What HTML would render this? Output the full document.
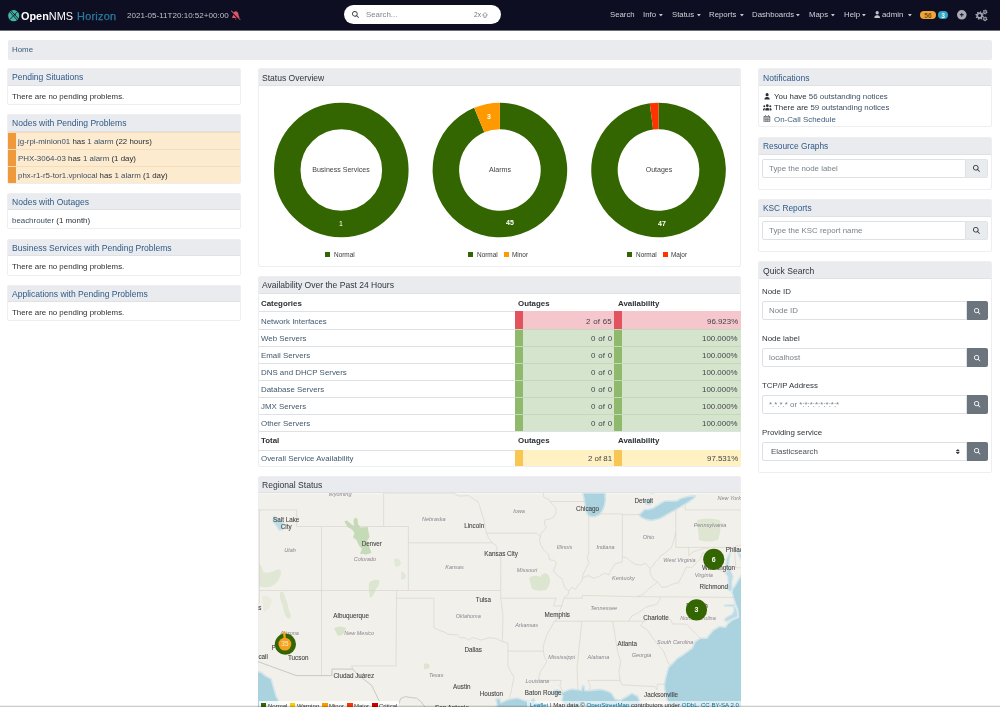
<!DOCTYPE html>
<html lang="en"><head><meta charset="utf-8"><title>OpenNMS Web Console</title>
<style>
*{box-sizing:border-box;margin:0;padding:0}
html,body{width:1000px;height:707px;overflow:hidden;background:#fff}
body{font-family:"Liberation Sans",Arial,sans-serif;font-size:7.9px;color:#2b2f33;position:relative;line-height:1}
.ab,.ic,.t{position:absolute}
.ic{overflow:visible}
.wc{will-change:transform}
.t{will-change:transform;white-space:nowrap;line-height:10px;height:10px}
.nav{left:0;top:0;width:1000px;height:30px;background:#0d0e22}
.nl{color:#d0d1d9;font-size:7.8px}
.card{position:absolute;border:1px solid #eceef0;border-radius:2px;background:#fff;overflow:hidden}
.ch{position:absolute;left:0;top:0;right:0;background:#e9ebee;border-bottom:1px solid #dfe2e5}
.h{font-size:8.55px;color:#2f5a88}
.hd{font-size:8.55px;color:#30363c}
a{color:#3d5c7c;text-decoration:none}
.b{font-weight:bold}
.inp{position:absolute;border:1px solid #dde1e5;border-radius:2px 0 0 2px;background:#fff}
.btnl{position:absolute;border:1px solid #e2e5e8;border-left:0;border-radius:0 2px 2px 0;background:#e9ecef}
.btnd{position:absolute;border-radius:0 2px 2px 0;background:#6c757d}
.ph{color:#7a8288}
</style></head>
<body>
<nav>
<div class="ab nav"></div><div class="ab" style="left:0;top:30px;width:1000px;height:1px;background:#6d6e7a"></div>
<svg class="ic" style="left:7.8px;top:9.6px;width:11.4px;height:11.4px" viewBox="0 0 100 100">
<circle cx="50" cy="50" r="49" fill="#43b5a2"/>
<path d="M14 14 L84 92 M26 6 L94 80 M88 10 L16 84" stroke="#0d0e22" stroke-width="7" fill="none"/>
<circle cx="60" cy="40" r="7" fill="#0d0e22"/>
</svg>
<div class="t " style="left:21.2px;top:10.40px;font-size:10.9px;color:#fff;line-height:12px;height:12px;top:9.6px"><span class="b">Open</span>NMS</div>
<div class="t " style="left:76.6px;top:10.40px;font-size:10.9px;color:#2a7ba0;letter-spacing:0.27px;line-height:12px;height:12px;top:9.6px;-webkit-text-stroke:0.25px #2a7ba0">Horizon</div>
<div class="t " style="left:127px;top:10.50px;font-size:8.05px;color:#bfc0c8">2021-05-11T20:10:52+00:00</div>
<svg class="ic" style="left:230.6px;top:10.6px;width:9.6px;height:8.6px;" viewBox="0 0 576 512" preserveAspectRatio="xMidYMid meet"><path fill="#dd5668" d="M41-24.9c-9.4-9.4-24.6-9.4-33.9 0S-2.3-.3 7 9.1l528 528c9.4 9.4 24.6 9.4 33.9 0s9.4-24.6 0-33.9l-87.5-87.5c17.2-2.4 30.5-17.3 30.5-35.2 0-8.1-2.7-15.9-7.8-22.2l-9.8-12.2c-29.9-37.6-46.3-84.3-46.3-132.4V192c0-77.4-55-142-128-156.8V32c0-17.7-14.3-32-32-32s-32 14.3-32 32v3.2c-38.6 7.8-72.2 29.6-95.2 59.7zm87 238.5c0 48.1-16.4 94.8-46.4 132.4l-9.8 12.2c-5 6.3-7.8 14.1-7.8 22.2 0 19.6 15.9 35.5 35.5 35.5h235.3L127.9 209v4.5zM288 512c29.8 0 54.9-20.4 62-48H226c7.1 27.6 32.2 48 62 48"/></svg>
<div class="ab" style="left:344.4px;top:5px;width:157px;height:19.4px;border-radius:9.7px;background:#fff"></div>
<svg class="ic" style="left:352.2px;top:11.4px;width:7px;height:7px;" viewBox="0 0 512 512" preserveAspectRatio="xMidYMid meet"><path fill="#3a3f45" d="M416 208c0 45.9-14.9 88.3-40 122.7l126.6 126.7c12.5 12.5 12.5 32.8 0 45.3s-32.8 12.5-45.3 0L330.7 376c-34.4 25.1-76.8 40-122.7 40C93.1 416 0 322.9 0 208S93.1 0 208 0s208 93.1 208 208M208 352a144 144 0 1 0 0-288 144 144 0 1 0 0 288"/></svg>
<div class="t " style="left:365.6px;top:10.00px;font-size:7.85px;color:#80868c">Search...</div>
<div class="t " style="left:473.6px;top:10.00px;font-size:6.6px;color:#70767c">2x</div>
<svg class="ic" style="left:481.8px;top:12px;width:6px;height:6px" viewBox="0 0 12 12"><path d="M6 1 L11 6.2 H8.3 V10.6 H3.7 V6.2 H1 Z" fill="none" stroke="#70767c" stroke-width="1.3" stroke-linejoin="round"/></svg>
<div class="t nl" style="left:610px;top:10.00px;">Search</div>
<div class="t nl" style="left:643.4px;top:10.00px;">Info</div>
<svg class="ic" style="left:659px;top:13.9px;width:3.8px;height:2.4px" viewBox="0 0 38 24"><path d="M2 1 H36 Q38 1 36.5 3 L20.5 22 Q19 24 17.5 22 L1.5 3 Q0 1 2 1Z" fill="#c9cad2"/></svg>
<div class="t nl" style="left:672px;top:10.00px;">Status</div>
<svg class="ic" style="left:696.6px;top:13.9px;width:3.8px;height:2.4px" viewBox="0 0 38 24"><path d="M2 1 H36 Q38 1 36.5 3 L20.5 22 Q19 24 17.5 22 L1.5 3 Q0 1 2 1Z" fill="#c9cad2"/></svg>
<div class="t nl" style="left:709px;top:10.00px;">Reports</div>
<svg class="ic" style="left:739.6px;top:13.9px;width:3.8px;height:2.4px" viewBox="0 0 38 24"><path d="M2 1 H36 Q38 1 36.5 3 L20.5 22 Q19 24 17.5 22 L1.5 3 Q0 1 2 1Z" fill="#c9cad2"/></svg>
<div class="t nl" style="left:752px;top:10.00px;">Dashboards</div>
<svg class="ic" style="left:796.4px;top:13.9px;width:3.8px;height:2.4px" viewBox="0 0 38 24"><path d="M2 1 H36 Q38 1 36.5 3 L20.5 22 Q19 24 17.5 22 L1.5 3 Q0 1 2 1Z" fill="#c9cad2"/></svg>
<div class="t nl" style="left:809px;top:10.00px;">Maps</div>
<svg class="ic" style="left:831px;top:13.9px;width:3.8px;height:2.4px" viewBox="0 0 38 24"><path d="M2 1 H36 Q38 1 36.5 3 L20.5 22 Q19 24 17.5 22 L1.5 3 Q0 1 2 1Z" fill="#c9cad2"/></svg>
<div class="t nl" style="left:843.6px;top:10.00px;">Help</div>
<svg class="ic" style="left:862px;top:13.9px;width:3.8px;height:2.4px" viewBox="0 0 38 24"><path d="M2 1 H36 Q38 1 36.5 3 L20.5 22 Q19 24 17.5 22 L1.5 3 Q0 1 2 1Z" fill="#c9cad2"/></svg>
<div class="t nl" style="left:882.4px;top:10.00px;">admin</div>
<svg class="ic" style="left:908.4px;top:13.9px;width:3.8px;height:2.4px" viewBox="0 0 38 24"><path d="M2 1 H36 Q38 1 36.5 3 L20.5 22 Q19 24 17.5 22 L1.5 3 Q0 1 2 1Z" fill="#c9cad2"/></svg>
<svg class="ic" style="left:874.2px;top:11.4px;width:6.4px;height:7px;" viewBox="0 0 448 512" preserveAspectRatio="xMidYMid meet"><path fill="#c3c4cc" d="M224 248a120 120 0 1 0 0-240 120 120 0 1 0 0 240m-29.7 56C95.8 304 16 383.8 16 482.3c0 16.4 13.3 29.7 29.7 29.7h356.6c16.4 0 29.7-13.3 29.7-29.7 0-98.5-79.8-178.3-178.3-178.3z"/></svg>
<div class="ab" style="left:920.4px;top:11.4px;width:15.6px;height:8px;border-radius:4px;background:#f0a53a"></div>
<div class="t b" style="left:828.20px;width:200px;text-align:center;top:10.50px;font-size:6.7px;color:#7a4c12">56</div>
<div class="ab" style="left:938px;top:11.4px;width:10.4px;height:8px;border-radius:4px;background:#2fa6c4"></div>
<div class="t b" style="left:843.20px;width:200px;text-align:center;top:10.50px;font-size:6.7px;color:#e6f6fa">3</div>
<svg class="ic" style="left:957px;top:10.2px;width:9.6px;height:9.6px;" viewBox="0 0 512 512" preserveAspectRatio="xMidYMid meet"><path fill="#a9abb7" d="M256 512a256 256 0 1 0 0-512 256 256 0 1 0 0 512m-24-168v-64h-64c-13.3 0-24-10.7-24-24s10.7-24 24-24h64v-64c0-13.3 10.7-24 24-24s24 10.7 24 24v64h64c13.3 0 24 10.7 24 24s-10.7 24-24 24h-64v64c0 13.3-10.7 24-24 24s-24-10.7-24-24"/></svg>
<svg class="ic" style="left:974px;top:8px;width:15px;height:15px" viewBox="974 8 15 15"><path fill="#9fa1ad" fill-rule="evenodd" d="M982.80 15.60L983.87 16.11L983.57 17.25L982.39 17.16L981.86 17.86L982.26 18.98L981.25 19.57L980.47 18.68L979.60 18.80L979.09 19.87L977.95 19.57L978.04 18.39L977.34 17.86L976.22 18.26L975.63 17.25L976.52 16.47L976.40 15.60L975.33 15.09L975.63 13.95L976.81 14.04L977.34 13.34L976.94 12.22L977.95 11.63L978.73 12.52L979.60 12.40L980.11 11.33L981.25 11.63L981.16 12.81L981.86 13.34L982.98 12.94L983.57 13.95L982.68 14.73ZM981.10 15.60A1.5 1.5 0 1 0 978.10 15.60A1.5 1.5 0 1 0 981.10 15.60ZM986.90 12.00L987.58 12.34L987.35 13.08L986.60 12.99L986.22 13.41L986.38 14.15L985.66 14.44L985.26 13.79L984.70 13.75L984.22 14.34L983.54 13.95L983.80 13.24L983.48 12.78L982.72 12.77L982.60 12.00L983.32 11.76L983.48 11.22L983.01 10.62L983.54 10.05L984.18 10.45L984.70 10.25L984.88 9.51L985.66 9.56L985.73 10.31L986.22 10.59L986.91 10.27L987.35 10.92L986.81 11.44ZM985.90 12.00A0.8 0.8 0 1 0 984.30 12.00A0.8 0.8 0 1 0 985.90 12.00ZM986.90 18.90L987.58 19.24L987.35 19.98L986.60 19.89L986.22 20.31L986.38 21.05L985.66 21.34L985.26 20.69L984.70 20.65L984.22 21.24L983.54 20.85L983.80 20.14L983.48 19.68L982.72 19.67L982.60 18.90L983.32 18.66L983.48 18.12L983.01 17.52L983.54 16.95L984.18 17.35L984.70 17.15L984.88 16.41L985.66 16.46L985.73 17.21L986.22 17.49L986.91 17.17L987.35 17.82L986.81 18.34ZM985.90 18.90A0.8 0.8 0 1 0 984.30 18.90A0.8 0.8 0 1 0 985.90 18.90Z"/></svg>
<div class="ab" style="left:7.75px;top:40px;width:984px;height:19.75px;background:#e9ebee;border-radius:2px"></div>
<div class="t " style="left:11.75px;top:45.00px;font-size:7.9px"><a>Home</a></div>
</nav>
<aside id="left-column">
<div class="card" style="left:7.4px;top:68.25px;width:233.4px;height:36.75px"><div class="ch" style="height:16.6px"></div></div><div class="t h" style="left:11.75px;top:72.25px;">Pending Situations</div><div class="t " style="left:11.75px;top:91.80px;">There are no pending problems.</div>
<div class="card" style="left:7.4px;top:114.25px;width:233.4px;height:69.5px"><div class="ch" style="height:16.9px"></div><div class="ab" style="left:0;top:16.90px;width:233.4px;height:17.2px;background:#fdebd0;border-top:0.5px solid #f6dcb9"><div class="ab" style="left:0;top:-0.5px;width:7.6px;height:17.3px;background:#f0993a"></div></div><div class="ab" style="left:0;top:34.00px;width:233.4px;height:17.2px;background:#fdebd0;border-top:0.5px solid #f6dcb9"><div class="ab" style="left:0;top:-0.5px;width:7.6px;height:17.3px;background:#f0993a"></div></div><div class="ab" style="left:0;top:51.10px;width:233.4px;height:17.2px;background:#fdebd0;border-top:0.5px solid #f6dcb9"><div class="ab" style="left:0;top:-0.5px;width:7.6px;height:17.3px;background:#f0993a"></div></div></div>
<div class="t h" style="left:11.75px;top:118.20px;">Nodes with Pending Problems</div>
<div class="t " style="left:17.5px;top:136.70px;"><a style="color:#3c5064">jg-rpi-minion01</a> has <a style="color:#3c5064">1 alarm</a> (22 hours)</div>
<div class="t " style="left:17.5px;top:153.82px;"><a style="color:#3c5064">PHX-3064-03</a> has <a style="color:#3c5064">1 alarm</a> (1 day)</div>
<div class="t " style="left:17.5px;top:170.94px;"><a style="color:#3c5064">phx-r1-r5-tor1.vpnlocal</a> has <a style="color:#3c5064">1 alarm</a> (1 day)</div>
<div class="card" style="left:7.4px;top:192.5px;width:233.4px;height:36.75px"><div class="ch" style="height:16.6px"></div></div><div class="t h" style="left:11.75px;top:196.50px;">Nodes with Outages</div><div class="t " style="left:11.75px;top:216.05px;"><a style="color:#3c5064">beachrouter</a> (1 month)</div>
<div class="card" style="left:7.4px;top:238.75px;width:233.4px;height:36.75px"><div class="ch" style="height:16.6px"></div></div><div class="t h" style="left:11.75px;top:242.75px;">Business Services with Pending Problems</div><div class="t " style="left:11.75px;top:262.30px;">There are no pending problems.</div>
<div class="card" style="left:7.4px;top:284.5px;width:233.4px;height:36.75px"><div class="ch" style="height:16.6px"></div></div><div class="t h" style="left:11.75px;top:288.50px;">Applications with Pending Problems</div><div class="t " style="left:11.75px;top:308.05px;">There are no pending problems.</div>
</aside>
<main id="content">
<div class="card" style="left:258px;top:68.25px;width:483.4px;height:198.9px"><div class="ch" style="height:16.5px"></div></div>
<div class="t hd" style="left:262px;top:72.50px;">Status Overview</div>
<svg class="ic" style="left:258px;top:86px;width:483px;height:180px" viewBox="258 86 483 180"><circle cx="341.3" cy="170" r="54.05" fill="none" stroke="#336600" stroke-width="26.5"/><path d="M499.90 102.70A67.3 67.3 0 1 1 474.15 107.82L484.29 132.31A40.8 40.8 0 1 0 499.90 129.20Z" fill="#336600"/><path d="M474.15 107.82A67.3 67.3 0 0 1 499.90 102.70L499.90 129.20A40.8 40.8 0 0 0 484.29 132.31Z" fill="#ff9900"/><path d="M658.50 102.70A67.3 67.3 0 1 1 649.72 103.28L653.17 129.55A40.8 40.8 0 1 0 658.50 129.20Z" fill="#336600"/><path d="M649.72 103.28A67.3 67.3 0 0 1 658.50 102.70L658.50 129.20A40.8 40.8 0 0 0 653.17 129.55Z" fill="#ff3300"/></svg>
<div class="t " style="left:241.30px;width:200px;text-align:center;top:165.00px;font-size:7.05px;color:#444">Business Services</div>
<div class="t " style="left:399.90px;width:200px;text-align:center;top:165.00px;font-size:7.05px;color:#444">Alarms</div>
<div class="t " style="left:558.50px;width:200px;text-align:center;top:165.00px;font-size:7.05px;color:#444">Outages</div>
<div class="t " style="left:241.30px;width:200px;text-align:center;top:219.10px;font-size:7px;color:#fff">1</div>
<div class="t b" style="left:410.20px;width:200px;text-align:center;top:218.40px;font-size:7px;color:#fff">45</div>
<div class="t b" style="left:389.40px;width:200px;text-align:center;top:112.00px;font-size:7px;color:#fff">3</div>
<div class="t b" style="left:561.60px;width:200px;text-align:center;top:218.80px;font-size:7px;color:#fff">47</div>
<div class="ab" style="left:325px;top:252.4px;width:5px;height:5px;background:#336600"></div><div class="t " style="left:333.8px;top:250.40px;font-size:6.45px;color:#383838">Normal</div>
<div class="ab" style="left:468px;top:252.4px;width:5px;height:5px;background:#336600"></div><div class="t " style="left:477px;top:250.40px;font-size:6.45px;color:#383838">Normal</div>
<div class="ab" style="left:503.8px;top:252.4px;width:5px;height:5px;background:#ff9900"></div><div class="t " style="left:512.3px;top:250.40px;font-size:6.45px;color:#383838">Minor</div>
<div class="ab" style="left:627px;top:252.4px;width:5px;height:5px;background:#336600"></div><div class="t " style="left:635.6px;top:250.40px;font-size:6.45px;color:#383838">Normal</div>
<div class="ab" style="left:662.6px;top:252.4px;width:5px;height:5px;background:#ff3300"></div><div class="t " style="left:671px;top:250.40px;font-size:6.45px;color:#383838">Major</div>
<div class="card" style="left:258px;top:276.25px;width:483.4px;height:190.6px"><div class="ch" style="height:16.7px"></div></div>
<div class="t hd" style="left:262px;top:280.40px;">Availability Over the Past 24 Hours</div>
<div class="t b" style="left:260.6px;top:298.90px;">Categories</div><div class="t b" style="left:517.6px;top:298.90px;">Outages</div><div class="t b" style="left:617.6px;top:298.90px;">Availability</div>
<div class="ab" style="left:258.5px;top:311.4px;width:482.5px;height:0.5px;background:#dee2e6"></div><div class="ab" style="left:515px;top:311.4px;width:226px;height:17.64px;background:#f5c6cb"></div><div class="ab" style="left:515px;top:311.4px;width:7.8px;height:17.64px;background:#e0535f"></div><div class="ab" style="left:614.3px;top:311.4px;width:7.8px;height:17.64px;background:#e0535f"></div><div class="t " style="left:260.6px;top:316.52px;"><a style="color:#41586e">Network Interfaces</a></div><div class="t " style="right:388.20px;top:316.52px;color:#40454b;word-spacing:0.7px">2 of 65</div><div class="t " style="right:262.00px;top:316.52px;color:#40454b">96.923%</div>
<div class="ab" style="left:258.5px;top:329.04px;width:482.5px;height:0.5px;background:#dee2e6"></div><div class="ab" style="left:515px;top:329.04px;width:226px;height:17.04px;background:#d5e4cd"></div><div class="ab" style="left:515px;top:329.04px;width:7.8px;height:17.04px;background:#8fba6c"></div><div class="ab" style="left:614.3px;top:329.04px;width:7.8px;height:17.04px;background:#8fba6c"></div><div class="ab" style="left:515px;top:329.04px;width:226px;height:0.5px;background:#c5d8bb"></div><div class="t " style="left:260.6px;top:333.86px;"><a style="color:#41586e">Web Servers</a></div><div class="t " style="right:388.20px;top:333.86px;color:#40454b;word-spacing:0.7px">0 of 0</div><div class="t " style="right:262.00px;top:333.86px;color:#40454b">100.000%</div>
<div class="ab" style="left:258.5px;top:346.08px;width:482.5px;height:0.5px;background:#dee2e6"></div><div class="ab" style="left:515px;top:346.08px;width:226px;height:17.04px;background:#d5e4cd"></div><div class="ab" style="left:515px;top:346.08px;width:7.8px;height:17.04px;background:#8fba6c"></div><div class="ab" style="left:614.3px;top:346.08px;width:7.8px;height:17.04px;background:#8fba6c"></div><div class="ab" style="left:515px;top:346.08px;width:226px;height:0.5px;background:#c5d8bb"></div><div class="t " style="left:260.6px;top:350.90px;"><a style="color:#41586e">Email Servers</a></div><div class="t " style="right:388.20px;top:350.90px;color:#40454b;word-spacing:0.7px">0 of 0</div><div class="t " style="right:262.00px;top:350.90px;color:#40454b">100.000%</div>
<div class="ab" style="left:258.5px;top:363.12px;width:482.5px;height:0.5px;background:#dee2e6"></div><div class="ab" style="left:515px;top:363.12px;width:226px;height:17.04px;background:#d5e4cd"></div><div class="ab" style="left:515px;top:363.12px;width:7.8px;height:17.04px;background:#8fba6c"></div><div class="ab" style="left:614.3px;top:363.12px;width:7.8px;height:17.04px;background:#8fba6c"></div><div class="ab" style="left:515px;top:363.12px;width:226px;height:0.5px;background:#c5d8bb"></div><div class="t " style="left:260.6px;top:367.94px;"><a style="color:#41586e">DNS and DHCP Servers</a></div><div class="t " style="right:388.20px;top:367.94px;color:#40454b;word-spacing:0.7px">0 of 0</div><div class="t " style="right:262.00px;top:367.94px;color:#40454b">100.000%</div>
<div class="ab" style="left:258.5px;top:380.15999999999997px;width:482.5px;height:0.5px;background:#dee2e6"></div><div class="ab" style="left:515px;top:380.15999999999997px;width:226px;height:17.04px;background:#d5e4cd"></div><div class="ab" style="left:515px;top:380.15999999999997px;width:7.8px;height:17.04px;background:#8fba6c"></div><div class="ab" style="left:614.3px;top:380.15999999999997px;width:7.8px;height:17.04px;background:#8fba6c"></div><div class="ab" style="left:515px;top:380.15999999999997px;width:226px;height:0.5px;background:#c5d8bb"></div><div class="t " style="left:260.6px;top:384.98px;"><a style="color:#41586e">Database Servers</a></div><div class="t " style="right:388.20px;top:384.98px;color:#40454b;word-spacing:0.7px">0 of 0</div><div class="t " style="right:262.00px;top:384.98px;color:#40454b">100.000%</div>
<div class="ab" style="left:258.5px;top:397.2px;width:482.5px;height:0.5px;background:#dee2e6"></div><div class="ab" style="left:515px;top:397.2px;width:226px;height:17.04px;background:#d5e4cd"></div><div class="ab" style="left:515px;top:397.2px;width:7.8px;height:17.04px;background:#8fba6c"></div><div class="ab" style="left:614.3px;top:397.2px;width:7.8px;height:17.04px;background:#8fba6c"></div><div class="ab" style="left:515px;top:397.2px;width:226px;height:0.5px;background:#c5d8bb"></div><div class="t " style="left:260.6px;top:402.02px;"><a style="color:#41586e">JMX Servers</a></div><div class="t " style="right:388.20px;top:402.02px;color:#40454b;word-spacing:0.7px">0 of 0</div><div class="t " style="right:262.00px;top:402.02px;color:#40454b">100.000%</div>
<div class="ab" style="left:258.5px;top:414.24px;width:482.5px;height:0.5px;background:#dee2e6"></div><div class="ab" style="left:515px;top:414.24px;width:226px;height:17.04px;background:#d5e4cd"></div><div class="ab" style="left:515px;top:414.24px;width:7.8px;height:17.04px;background:#8fba6c"></div><div class="ab" style="left:614.3px;top:414.24px;width:7.8px;height:17.04px;background:#8fba6c"></div><div class="ab" style="left:515px;top:414.24px;width:226px;height:0.5px;background:#c5d8bb"></div><div class="t " style="left:260.6px;top:419.06px;"><a style="color:#41586e">Other Servers</a></div><div class="t " style="right:388.20px;top:419.06px;color:#40454b;word-spacing:0.7px">0 of 0</div><div class="t " style="right:262.00px;top:419.06px;color:#40454b">100.000%</div>
<div class="ab" style="left:258.5px;top:431.3px;width:482.5px;height:0.5px;background:#dee2e6"></div>
<div class="t b" style="left:260.6px;top:436.20px;">Total</div><div class="t b" style="left:517.6px;top:436.20px;">Outages</div><div class="t b" style="left:617.6px;top:436.20px;">Availability</div>
<div class="ab" style="left:258.5px;top:449.5px;width:482.5px;height:0.5px;background:#dee2e6"></div><div class="ab" style="left:515px;top:449.5px;width:226px;height:16.9px;background:#fff1c2"></div><div class="ab" style="left:515px;top:449.5px;width:7.8px;height:16.9px;background:#f7c654"></div><div class="ab" style="left:614.3px;top:449.5px;width:7.8px;height:16.9px;background:#f7c654"></div><div class="t " style="left:260.6px;top:453.65px;"><a style="color:#41586e">Overall Service Availability</a></div><div class="t " style="right:388.20px;top:453.65px;color:#40454b;word-spacing:0px">2 of 81</div><div class="t " style="right:262.00px;top:453.65px;color:#40454b">97.531%</div>
<div class="card" style="left:258px;top:476.25px;width:483.4px;height:240px"><div class="ch" style="height:16.2px"></div></div>
<div class="t hd" style="left:262px;top:480.30px;">Regional Status</div>
<svg class="ic wc" style="left:258px;top:493px;width:483px;height:214px" viewBox="258 493 483 214"><defs><clipPath id="mc"><rect x="258.6" y="493.2" width="482.4" height="213.8"/></clipPath></defs><g clip-path="url(#mc)"><rect x="258.6" y="493.2" width="482.4" height="213.8" fill="#f2f0ea"/><defs><filter id="gb" x="-20%" y="-20%" width="140%" height="140%"><feGaussianBlur stdDeviation="0.7"/></filter></defs><g filter="url(#gb)"><path d="M344.4 521.5 L347 520.5 L351 524 L354 526 L353.5 520 L355.2 517.5 L357.5 519 L358 524 L360.5 527.5 L367.5 527 L368.5 532 L369.5 537 L367 541 L369 546 L371.5 553 L366 554.5 L360 553.5 L362 549 L359 545.5 L356.5 540 L353 537.5 L354.5 533 L352 529.5 L347.5 527 Z" fill="#b9d4a6" opacity="0.78"/><path d="M369 583 Q373 579 379 580 Q380 585 376 589 Q374 596 370 598 Q368 590 369 583Z" fill="#b9d4a6" opacity="0.39"/><path d="M394 559 Q399 557 401 563 Q399 568 395 566Z" fill="#b9d4a6" opacity="0.27"/><path d="M401 572 Q405 571 406 577 Q404 581 401 579Z" fill="#b9d4a6" opacity="0.27"/><path d="M259 563 Q262 566 263 572 Q270 574 276 570 Q282 568 281 574 Q278 584 270 587 Q262 588 259 586Z" fill="#b9d4a6" opacity="0.30"/><path d="M280 592 Q284 591 285 597 Q288 603 289 610 Q292 616 290 619 Q285 618 284 611 Q282 603 280 598Z" fill="#b9d4a6" opacity="0.31"/><path d="M262 596 Q268 594 272 600 Q270 610 264 612Z" fill="#b9d4a6" opacity="0.16"/><path d="M334 628 Q340 625 346 628 Q345 635 338 636Z" fill="#b9d4a6" opacity="0.47"/><path d="M529 578 Q534 574 540 577 Q545 570 549 576 Q552 584 546 590 Q538 592 532 589Z" fill="#b9d4a6" opacity="0.39"/><path d="M697 520 Q708 517 720 520 Q722 530 718 540 Q708 543 699 540Z" fill="#b9d4a6" opacity="0.35"/><path d="M424 664 Q428 662 430 666 Q428 670 424 669Z" fill="#b9d4a6" opacity="0.39"/></g><path d="M646.2 504.1L650.0 504.9L651.8 501.5L648.7 499.0L646.2 501.5ZM651.2 493.1L653.7 489.7L661.1 489.7L659.9 491.4ZM746.8 558.1L745.0 559.7L743.1 555.7L739.4 553.3L737.5 549.3L738.2 553.3L740.6 558.9L743.1 562.1L743.7 567.7L741.9 574.0L738.2 580.3L735.0 585.8L732.6 588.9L731.9 592.0L733.4 597.4L735.7 604.4L737.9 609.7L738.4 617.4L732.6 619.7L728.2 623.4L725.4 627.2L719.5 626.5L713.3 630.2L708.3 636.2L707.1 638.2L700.3 638.3L695.3 641.5L692.2 648.2L687.2 651.9L683.1 654.8L677.3 658.5L671.7 664.4L668.6 667.3L666.1 676.1L664.3 684.5L664.9 690.5L666.1 696.3L669.8 709.1L746.8 709.1ZM492.2 710.5L497.2 705.6L496.0 699.1L499.7 698.4L500.9 702.7L508.4 699.4L517.1 698.1L525.8 700.9L530.7 701.3L533.2 698.4L535.7 702.0L540.7 702.7L543.2 705.6L548.1 707.7L550.6 710.5ZM566.8 710.5L564.3 704.8L561.8 700.6L563.0 695.6L559.9 694.1L563.0 692.4L566.8 690.5L571.7 689.1L577.9 689.8L581.7 690.5L582.3 685.5L584.1 686.2L584.8 690.5L589.1 690.8L592.8 690.1L601.5 689.4L607.7 691.3L611.5 693.4L615.2 699.1L620.2 700.3L627.6 696.0L632.0 693.4L637.5 696.3L640.0 702.0L643.8 707.0L645.0 710.5ZM553.1 692.7L555.6 694.6L559.3 693.4L560.5 691.3L557.4 689.8L554.3 690.5ZM245.1 667.3L250.7 668.8L252.5 670.2L261.2 672.4L265.6 676.1L271.2 679.0L273.6 687.7L276.1 696.3L281.1 704.8L282.3 710.5L245.1 710.5ZM583.0 493.0L584.3 500.4L585.3 506.9L586.3 512.1L588.2 515.4L591.5 516.8L594.7 516.8L599.3 514.7L602.5 510.8L604.5 505.6L605.4 500.4L605.1 493.0ZM638.9 514.7L641.5 517.5L645.4 519.3L650.0 520.4L653.2 520.2L657.0 519.2L661.0 518.0L665.0 515.8L668.8 513.4L674.0 510.8L680.5 506.9L687.0 503.0L693.5 498.5L695.9 495.9L692.2 495.9L687.0 496.8L680.5 498.5L676.6 501.0L671.4 501.0L665.0 501.0L661.0 503.0L657.1 505.6L653.2 508.2L648.0 509.5L644.1 509.5L642.2 512.1Z" fill="#aad3df" stroke="#d3e5ea" stroke-width="1.6" stroke-linejoin="round"/><path d="M731.3 550.9L728.8 554.1L726.4 558.9L725.7 565.3L727.0 570.1L725.7 574.0L727.6 576.4L728.2 582.7L727.0 587.3L728.2 590.5L731.9 591.5L732.3 588.1L731.9 582.7L733.2 576.4L731.3 571.6L728.8 565.3L729.5 558.9L730.7 554.1ZM736.9 609.7L737.9 616.6L731.9 619.3L726.4 621.9L723.9 619.7L727.0 616.6L731.9 614.3L733.8 610.5L733.2 606.7L724.5 606.4L724.5 604.8L733.8 604.1L735.0 606.7ZM273.6 515.8L279.9 519.1L284.2 523.2L283.0 529.8L279.2 530.6L275.5 524.9L272.4 521.6Z" fill="#bfdce6" stroke="#dce9ea" stroke-width="1.2" stroke-linejoin="round"/><path d="M255.0 509.9L296.6 509.9L296.6 526.5L408.4 526.5M259.4 509.9L259.4 602.8L255.0 604.4L251.3 605.9M259.4 590.5L500.7 590.5M321.5 526.5L321.5 675.6M383.6 491.4L383.6 526.5M408.4 526.5L408.4 590.5M408.4 542.8L492.2 542.8M396.6 590.5L396.0 665.9L351.6 665.9M396.6 598.2L433.9 598.2L433.9 627.8M433.9 627.8L438.8 630.2L443.8 631.7L447.5 634.0L452.5 634.7L457.5 634.7L459.9 637.7L464.9 637.7L468.6 640.0L472.4 637.7L476.1 638.5L481.1 640.0L489.8 637.7L496.0 638.5L502.4 641.6L507.9 643.0M500.7 590.5L500.8 557.0M452.5 493.1L459.9 496.1L468.6 495.6L474.8 499.8L478.0 501.5L479.8 506.6L482.3 514.9L484.4 521.6L485.4 528.1L486.4 533.1L489.1 538.8L492.2 542.8L496.0 545.3L497.2 549.3L495.3 552.5L498.4 555.7L500.8 557.0M383.6 493.1L452.5 493.1M486.4 533.1L536.6 533.1L540.4 536.7M543.2 491.4L543.8 497.3L549.4 499.8L550.1 501.5L553.1 504.9L556.1 508.2L555.8 513.3L553.7 516.9L549.4 519.1L545.0 519.9L544.4 523.2L546.3 527.3L544.4 529.8L540.7 533.9L540.4 536.7L539.4 539.6L540.4 544.0L543.2 549.3L548.7 554.9L549.4 559.7L554.3 560.5L556.2 562.1L555.8 564.8L553.5 570.9L556.8 574.8L561.8 578.7L564.3 585.8L565.5 588.9L568.9 590.8L568.0 595.1L564.3 597.4L563.0 601.3L561.8 605.9L558.7 613.6L557.1 618.9L554.3 621.2L551.2 627.2L546.9 634.7L544.4 642.2L543.2 646.7L543.5 651.1L544.4 657.0L546.9 661.5L543.2 667.3L540.1 672.4L538.2 680.4M568.9 590.8L571.7 587.3L575.4 589.4L577.9 585.8L581.7 581.1L582.5 578.0L588.2 575.6L594.0 578.3L599.0 576.4L601.5 574.8L604.6 573.2L609.0 574.8L610.7 570.5L615.2 563.7L622.0 562.1L622.4 557.3L626.2 557.3L629.5 560.5L635.6 564.5L641.3 565.0L645.0 563.2L650.1 568.2L653.7 565.3L654.9 562.1L658.7 558.9L660.5 555.7L662.9 554.6L665.5 552.5L671.5 547.7L673.3 541.7L674.8 536.3L675.8 532.4M500.7 590.5L500.7 598.2L503.0 615.2L502.4 641.6M500.7 598.2L556.2 598.2L553.5 605.9L561.8 605.9M507.9 643.0L507.9 665.9L510.9 671.7L514.0 677.5L512.1 686.2L511.5 690.5L509.6 697.7M507.9 651.1L543.5 651.1M538.2 680.4L561.4 680.4L559.9 685.5L563.0 692.0M554.3 621.2L643.8 621.2M580.4 621.2L581.7 622.7L577.1 667.3L577.9 690.5M612.7 621.2L617.9 653.1L620.8 661.5L618.9 671.7L620.2 680.4L621.9 684.8M587.9 680.4L620.2 680.4M587.9 680.4L590.4 686.2L589.1 690.5M621.9 684.8L654.9 686.6L656.8 689.8L657.4 684.0L664.3 684.5M564.3 598.2L582.3 598.2L582.3 595.4L636.6 596.7L661.4 596.8L733.6 597.4M588.7 513.9L588.7 553.3L587.2 557.3L589.1 562.9L586.0 568.5L582.9 574.8L582.5 578.0M622.4 514.6L622.4 557.3M592.8 513.9L622.4 513.9L622.4 514.9L639.4 514.4M550.1 501.5L585.4 501.5M675.8 504.9L675.8 547.4M675.8 547.4L734.5 547.4M685.2 505.4L685.2 509.9L740.0 509.9L743.1 513.3L748.1 520.7L743.1 528.1L741.9 533.1L747.5 539.6L743.1 543.6L738.8 546.1M734.5 547.4L736.9 545.6L738.8 546.1M734.5 547.4L735.7 567.7L743.7 567.7M688.7 547.4L688.7 555.7L693.4 551.7L698.4 550.1L702.1 549.0L704.6 548.0L709.0 549.3L710.6 553.8L713.3 557.3L718.3 559.7L719.0 562.1L715.8 567.7L719.5 570.1L724.5 572.4L728.2 574.8M650.1 568.2L650.0 573.2L653.7 579.5L657.8 582.0L648.7 588.9L643.1 594.3L636.6 596.7M657.8 582.0L661.8 587.3L667.4 586.6L672.3 584.2L678.5 582.7L682.3 575.6L686.6 566.9L691.6 567.7L696.3 562.8L700.3 558.9L702.8 552.5L709.0 556.5L710.6 553.8M628.6 621.2L632.0 615.8L638.8 612.5L645.6 607.4L650.0 605.9L656.8 604.4L661.4 596.8M643.8 621.2L652.5 618.1L669.2 618.9L670.7 619.7L672.6 623.9L686.4 624.2L700.3 638.3M643.8 621.2L640.7 625.7L646.9 629.5L652.5 637.7L657.8 644.2L663.6 651.1L668.0 662.9L671.1 665.4M351.6 665.9L352.8 669.1" fill="none" stroke="#d3cec8" stroke-width="0.55" stroke-linejoin="round"/><path d="M255.0 657.0L249.9 658.7L296.4 675.6L331.9 675.6L331.9 669.1L352.8 669.1L356.9 673.9L364.3 679.7L371.8 685.5L375.5 693.4L379.2 701.1L384.2 704.8L389.1 707.7L394.1 709.8M396.6 709.8L398.5 704.8L400.7 698.6L405.3 696.6L411.5 697.7L416.5 698.1L421.4 702.0L422.7 704.0L425.8 708.4L427.7 710.5" fill="none" stroke="#c2bcb6" stroke-width="0.8" stroke-linejoin="round"/><text x="286.2" y="521.6" font-size="6.3" fill="#444" text-anchor="middle" font-family="Liberation Sans, sans-serif" stroke="#444" stroke-width="0.08">Salt Lake</text><text x="286.2" y="529.2" font-size="6.3" fill="#444" text-anchor="middle" font-family="Liberation Sans, sans-serif" stroke="#444" stroke-width="0.08">City</text><text x="371.8" y="546.2" font-size="6.3" fill="#444" text-anchor="middle" font-family="Liberation Sans, sans-serif" stroke="#444" stroke-width="0.08">Denver</text><text x="474.2" y="528.2" font-size="6.3" fill="#444" text-anchor="middle" font-family="Liberation Sans, sans-serif" stroke="#444" stroke-width="0.08">Lincoln</text><text x="501.1" y="556.2" font-size="6.3" fill="#444" text-anchor="middle" font-family="Liberation Sans, sans-serif" stroke="#444" stroke-width="0.08">Kansas City</text><text x="483.4" y="602.1" font-size="6.3" fill="#444" text-anchor="middle" font-family="Liberation Sans, sans-serif" stroke="#444" stroke-width="0.08">Tulsa</text><text x="587.5" y="511.2" font-size="6.3" fill="#444" text-anchor="middle" font-family="Liberation Sans, sans-serif" stroke="#444" stroke-width="0.08">Chicago</text><text x="643.8" y="503.2" font-size="6.3" fill="#444" text-anchor="middle" font-family="Liberation Sans, sans-serif" stroke="#444" stroke-width="0.08">Detroit</text><text x="351.2" y="618.1" font-size="6.3" fill="#444" text-anchor="middle" font-family="Liberation Sans, sans-serif" stroke="#444" stroke-width="0.08">Albuquerque</text><text x="298.2" y="660.4" font-size="6.3" fill="#444" text-anchor="middle" font-family="Liberation Sans, sans-serif" stroke="#444" stroke-width="0.08">Tucson</text><text x="353.8" y="677.9" font-size="6.3" fill="#444" text-anchor="middle" font-family="Liberation Sans, sans-serif" stroke="#444" stroke-width="0.08">Ciudad Juárez</text><text x="473.2" y="652.4" font-size="6.3" fill="#444" text-anchor="middle" font-family="Liberation Sans, sans-serif" stroke="#444" stroke-width="0.08">Dallas</text><text x="461.8" y="688.6" font-size="6.3" fill="#444" text-anchor="middle" font-family="Liberation Sans, sans-serif" stroke="#444" stroke-width="0.08">Austin</text><text x="491.4" y="696.1" font-size="6.3" fill="#444" text-anchor="middle" font-family="Liberation Sans, sans-serif" stroke="#444" stroke-width="0.08">Houston</text><text x="557.2" y="617.4" font-size="6.3" fill="#444" text-anchor="middle" font-family="Liberation Sans, sans-serif" stroke="#444" stroke-width="0.08">Memphis</text><text x="543.2" y="695.2" font-size="6.3" fill="#444" text-anchor="middle" font-family="Liberation Sans, sans-serif" stroke="#444" stroke-width="0.08">Baton Rouge</text><text x="452" y="709.5" font-size="6.3" fill="#444" text-anchor="middle" font-family="Liberation Sans, sans-serif" stroke="#444" stroke-width="0.08">San Antonio</text><text x="656" y="620.1" font-size="6.3" fill="#444" text-anchor="middle" font-family="Liberation Sans, sans-serif" stroke="#444" stroke-width="0.08">Charlotte</text><text x="627.3" y="646.4" font-size="6.3" fill="#444" text-anchor="middle" font-family="Liberation Sans, sans-serif" stroke="#444" stroke-width="0.08">Atlanta</text><text x="661.1" y="697.4" font-size="6.3" fill="#444" text-anchor="middle" font-family="Liberation Sans, sans-serif" stroke="#444" stroke-width="0.08">Jacksonville</text><text x="713.8" y="589.4" font-size="6.3" fill="#444" text-anchor="middle" font-family="Liberation Sans, sans-serif" stroke="#444" stroke-width="0.08">Richmond</text><text x="743" y="551.5" font-size="6.3" fill="#444" text-anchor="middle" font-family="Liberation Sans, sans-serif" stroke="#444" stroke-width="0.08">Philadelphia</text><text x="718.5" y="569.5" font-size="6.3" fill="#444" text-anchor="middle" font-family="Liberation Sans, sans-serif" stroke="#444" stroke-width="0.08">Washington</text><text x="697" y="607.6" font-size="6.3" fill="#444" text-anchor="middle" font-family="Liberation Sans, sans-serif" stroke="#444" stroke-width="0.08">Raleigh</text><text x="283" y="650.4" font-size="6.3" fill="#444" text-anchor="middle" font-family="Liberation Sans, sans-serif" stroke="#444" stroke-width="0.08">Phoenix</text><text x="256.5" y="659.2" font-size="6.3" fill="#444" text-anchor="middle" font-family="Liberation Sans, sans-serif" stroke="#444" stroke-width="0.08">Mexicali</text><text x="246.6" y="610.4" font-size="6.3" fill="#444" text-anchor="middle" font-family="Liberation Sans, sans-serif" stroke="#444" stroke-width="0.08">Las Vegas</text><text x="340" y="496" font-size="5.5" fill="#8a8490" text-anchor="middle" font-style="italic" font-family="Liberation Sans, sans-serif">Wyoming</text><text x="290" y="552.3" font-size="5.5" fill="#8a8490" text-anchor="middle" font-style="italic" font-family="Liberation Sans, sans-serif">Utah</text><text x="365" y="561" font-size="5.5" fill="#8a8490" text-anchor="middle" font-style="italic" font-family="Liberation Sans, sans-serif">Colorado</text><text x="433.8" y="520.6" font-size="5.5" fill="#8a8490" text-anchor="middle" font-style="italic" font-family="Liberation Sans, sans-serif">Nebraska</text><text x="454.5" y="568.8" font-size="5.5" fill="#8a8490" text-anchor="middle" font-style="italic" font-family="Liberation Sans, sans-serif">Kansas</text><text x="468.2" y="617.6" font-size="5.5" fill="#8a8490" text-anchor="middle" font-style="italic" font-family="Liberation Sans, sans-serif">Oklahoma</text><text x="359.2" y="635" font-size="5.5" fill="#8a8490" text-anchor="middle" font-style="italic" font-family="Liberation Sans, sans-serif">New Mexico</text><text x="289.5" y="634.8" font-size="5.5" fill="#8a8490" text-anchor="middle" font-style="italic" font-family="Liberation Sans, sans-serif">Arizona</text><text x="436.2" y="677.3" font-size="5.5" fill="#8a8490" text-anchor="middle" font-style="italic" font-family="Liberation Sans, sans-serif">Texas</text><text x="519.1" y="513.2" font-size="5.5" fill="#8a8490" text-anchor="middle" font-style="italic" font-family="Liberation Sans, sans-serif">Iowa</text><text x="564.5" y="548.5" font-size="5.5" fill="#8a8490" text-anchor="middle" font-style="italic" font-family="Liberation Sans, sans-serif">Illinois</text><text x="527.1" y="571.5" font-size="5.5" fill="#8a8490" text-anchor="middle" font-style="italic" font-family="Liberation Sans, sans-serif">Missouri</text><text x="526.6" y="626.7" font-size="5.5" fill="#8a8490" text-anchor="middle" font-style="italic" font-family="Liberation Sans, sans-serif">Arkansas</text><text x="561.6" y="658.6" font-size="5.5" fill="#8a8490" text-anchor="middle" font-style="italic" font-family="Liberation Sans, sans-serif">Mississippi</text><text x="537.3" y="682.8" font-size="5.5" fill="#8a8490" text-anchor="middle" font-style="italic" font-family="Liberation Sans, sans-serif">Louisiana</text><text x="598.4" y="658.6" font-size="5.5" fill="#8a8490" text-anchor="middle" font-style="italic" font-family="Liberation Sans, sans-serif">Alabama</text><text x="641.5" y="657.3" font-size="5.5" fill="#8a8490" text-anchor="middle" font-style="italic" font-family="Liberation Sans, sans-serif">Georgia</text><text x="675.2" y="643.7" font-size="5.5" fill="#8a8490" text-anchor="middle" font-style="italic" font-family="Liberation Sans, sans-serif">South Carolina</text><text x="698" y="620.4" font-size="5.5" fill="#8a8490" text-anchor="middle" font-style="italic" font-family="Liberation Sans, sans-serif">North Carolina</text><text x="603.8" y="610.2" font-size="5.5" fill="#8a8490" text-anchor="middle" font-style="italic" font-family="Liberation Sans, sans-serif">Tennessee</text><text x="623.4" y="579.8" font-size="5.5" fill="#8a8490" text-anchor="middle" font-style="italic" font-family="Liberation Sans, sans-serif">Kentucky</text><text x="605.5" y="548.8" font-size="5.5" fill="#8a8490" text-anchor="middle" font-style="italic" font-family="Liberation Sans, sans-serif">Indiana</text><text x="648.5" y="539" font-size="5.5" fill="#8a8490" text-anchor="middle" font-style="italic" font-family="Liberation Sans, sans-serif">Ohio</text><text x="679.4" y="562.1" font-size="5.5" fill="#8a8490" text-anchor="middle" font-style="italic" font-family="Liberation Sans, sans-serif">West Virginia</text><text x="703.8" y="576.9" font-size="5.5" fill="#8a8490" text-anchor="middle" font-style="italic" font-family="Liberation Sans, sans-serif">Virginia</text><text x="710" y="527.1" font-size="5.5" fill="#8a8490" text-anchor="middle" font-style="italic" font-family="Liberation Sans, sans-serif">Pennsylvania</text><text x="729.2" y="499.5" font-size="5.5" fill="#8a8490" text-anchor="middle" font-style="italic" font-family="Liberation Sans, sans-serif">New York</text><circle cx="713.8" cy="559.3" r="10.6" fill="#336600"/><text x="713.8" y="561.6999999999999" font-size="7" font-weight="bold" fill="#fff" text-anchor="middle" font-family="Liberation Sans, sans-serif">6</text><circle cx="696.5" cy="609.9" r="10.6" fill="#336600"/><text x="696.5" y="612.3" font-size="7" font-weight="bold" fill="#fff" text-anchor="middle" font-family="Liberation Sans, sans-serif">3</text><circle cx="285.4" cy="644.2" r="10.6" fill="#336600"/><path d="M283.6 639 L283.0 631.6 L285.3 631.2 L285.9 639Z" fill="#f5a11f"/><circle cx="284.9" cy="644.1" r="6.4" fill="#f5a11f"/><text x="284.9" y="646.4" font-size="6.4" fill="#fff0c8" text-anchor="middle" font-family="Liberation Sans, sans-serif">35</text></g></svg>
<div class="ab" style="left:258.5px;top:701.2px;width:140.5px;height:8px;background:rgba(255,255,255,0.85)"></div>
<div class="ab" style="left:260.7px;top:702.5px;width:5.6px;height:5.6px;background:#336600"></div>
<div class="t " style="left:267.8px;top:700.60px;font-size:6px;color:#333">Normal</div>
<div class="ab" style="left:289.9px;top:702.5px;width:5.6px;height:5.6px;background:#ffcc00"></div>
<div class="t " style="left:296.7px;top:700.60px;font-size:6px;color:#333">Warning</div>
<div class="ab" style="left:322.1px;top:702.5px;width:5.6px;height:5.6px;background:#ff9900"></div>
<div class="t " style="left:329px;top:700.60px;font-size:6px;color:#333">Minor</div>
<div class="ab" style="left:347.3px;top:702.5px;width:5.6px;height:5.6px;background:#ff3300"></div>
<div class="t " style="left:354px;top:700.60px;font-size:6px;color:#333">Major</div>
<div class="ab" style="left:372.4px;top:702.5px;width:5.6px;height:5.6px;background:#cc0000"></div>
<div class="t " style="left:379.2px;top:700.60px;font-size:6px;color:#333">Critical</div>
<div class="ab" style="left:527px;top:701.4px;width:214px;height:6px;background:rgba(255,255,255,0.6)"></div>
<div class="t " style="left:529.5px;top:699.90px;font-size:6.09px;color:#333"><a style="color:#0078a8">Leaflet</a> | Map data © <a style="color:#0078a8">OpenStreetMap</a> contributors under <a style="color:#0078a8">ODbL</a>, <a style="color:#0078a8">CC BY-SA 2.0</a></div>
<div class="ab" style="left:0;top:705px;width:1000px;height:1px;background:rgba(0,0,0,0.06)"></div><div class="ab" style="left:0;top:706px;width:1000px;height:1px;background:rgba(0,0,0,0.2)"></div>
</main>
<aside id="right-column">
<div class="card" style="left:758.25px;top:68.25px;width:233.5px;height:58.9px"><div class="ch" style="height:16.5px"></div></div>
<div class="t h" style="left:762.5px;top:72.50px;">Notifications</div>
<svg class="ic" style="left:763.5px;top:92.6px;width:6.2px;height:6.6px;" viewBox="0 0 448 512" preserveAspectRatio="xMidYMid meet"><path fill="#2b2f33" d="M224 248a120 120 0 1 0 0-240 120 120 0 1 0 0 240m-29.7 56C95.8 304 16 383.8 16 482.3c0 16.4 13.3 29.7 29.7 29.7h356.6c16.4 0 29.7-13.3 29.7-29.7 0-98.5-79.8-178.3-178.3-178.3z"/></svg>
<div class="t " style="left:773.6px;top:91.60px;">You have <a style="color:#3c5064">56 outstanding notices</a></div>
<svg class="ic" style="left:762.7px;top:103.9px;width:8.6px;height:7px;" viewBox="0 0 640 512" preserveAspectRatio="xMidYMid meet"><path fill="#2b2f33" d="M320 16a104 104 0 1 1 0 208 104 104 0 1 1 0-208M96 88a72 72 0 1 1 0 144 72 72 0 1 1 0-144M0 416c0-70.7 57.3-128 128-128 12.8 0 25.2 1.9 36.9 5.4C132 330.2 112 378.8 112 432v16c0 11.4 2.4 22.2 6.7 32H32c-17.7 0-32-14.3-32-32zm521.3 64c4.3-9.8 6.7-20.6 6.7-32v-16c0-53.2-20-101.8-52.9-138.6 11.7-3.5 24.1-5.4 36.9-5.4 70.7 0 128 57.3 128 128v32c0 17.7-14.3 32-32 32zM472 160a72 72 0 1 1 144 0 72 72 0 1 1-144 0M160 432c0-88.4 71.6-160 160-160s160 71.6 160 160v16c0 17.7-14.3 32-32 32H192c-17.7 0-32-14.3-32-32z"/></svg>
<div class="t " style="left:773.6px;top:102.60px;">There are <a style="color:#3c5064">59 outstanding notices</a></div>
<svg class="ic" style="left:763px;top:115.4px;width:7.8px;height:7.6px;" viewBox="0 0 448 512" preserveAspectRatio="xMidYMid meet"><path fill="#555c63" d="M120 0c13.3 0 24 10.7 24 24v40h160V24c0-13.3 10.7-24 24-24s24 10.7 24 24v40h32c35.3 0 64 28.7 64 64v288c0 35.3-28.7 64-64 64H64c-35.3 0-64-28.7-64-64V128c0-35.3 28.7-64 64-64h32V24c0-13.3 10.7-24 24-24m264 432c8.8 0 16-7.2 16-16v-64h-88v80zm16-128v-80h-88v80zm-136 0v-80h-80v80zm-128 0v-80H48v80zm-88 48v64c0 8.8 7.2 16 16 16h72v-80zm136 0v80h80v-80zm-64-240H64c-8.8 0-16 7.2-16 16v48h352v-48c0-8.8-7.2-16-16-16z"/></svg>
<div class="t " style="left:773.6px;top:114.50px;"><a>On-Call Schedule</a></div>
<div class="card" style="left:758.25px;top:136.75px;width:233.5px;height:52.9px"><div class="ch" style="height:16.8px"></div></div><div class="t h" style="left:762.5px;top:140.85px;font-size:8.33px">Resource Graphs</div><div class="inp" style="left:762.4px;top:159.05px;width:204px;height:18.5px"></div><div class="btnl" style="left:966.4px;top:159.05px;width:21.2px;height:18.5px"></div><svg class="ic" style="left:973.4px;top:164.95px;width:6.9px;height:6.9px;" viewBox="0 0 512 512" preserveAspectRatio="xMidYMid meet"><path fill="#2b3035" d="M416 208c0 45.9-14.9 88.3-40 122.7l126.6 126.7c12.5 12.5 12.5 32.8 0 45.3s-32.8 12.5-45.3 0L330.7 376c-34.4 25.1-76.8 40-122.7 40C93.1 416 0 322.9 0 208S93.1 0 208 0s208 93.1 208 208M208 352a144 144 0 1 0 0-288 144 144 0 1 0 0 288"/></svg><div class="t ph" style="left:769.4px;top:164.15px;">Type the node label</div>
<div class="card" style="left:758.25px;top:199.2px;width:233.5px;height:52.9px"><div class="ch" style="height:16.8px"></div></div><div class="t h" style="left:762.5px;top:203.30px;font-size:8.33px">KSC Reports</div><div class="inp" style="left:762.4px;top:221.10px;width:204px;height:18.7px"></div><div class="btnl" style="left:966.4px;top:221.10px;width:21.2px;height:18.7px"></div><svg class="ic" style="left:973.4px;top:227.39999999999998px;width:6.9px;height:6.9px;" viewBox="0 0 512 512" preserveAspectRatio="xMidYMid meet"><path fill="#2b3035" d="M416 208c0 45.9-14.9 88.3-40 122.7l126.6 126.7c12.5 12.5 12.5 32.8 0 45.3s-32.8 12.5-45.3 0L330.7 376c-34.4 25.1-76.8 40-122.7 40C93.1 416 0 322.9 0 208S93.1 0 208 0s208 93.1 208 208M208 352a144 144 0 1 0 0-288 144 144 0 1 0 0 288"/></svg><div class="t ph" style="left:769.4px;top:225.90px;">Type the KSC report name</div>
<div class="card" style="left:758.25px;top:261.4px;width:233.5px;height:211.8px"><div class="ch" style="height:16.5px"></div></div>
<div class="t hd" style="left:762.5px;top:265.60px;">Quick Search</div>
<div class="t " style="left:762.4px;top:287.00px;color:#30363c">Node ID</div>
<div class="inp" style="left:762.4px;top:301.4px;width:204.2px;height:18.8px"></div>
<div class="btnd" style="left:966.6px;top:301.4px;width:21px;height:18.8px"></div>
<svg class="ic" style="left:973.9px;top:307.59999999999997px;width:6.4px;height:6.4px;" viewBox="0 0 512 512" preserveAspectRatio="xMidYMid meet"><path fill="#fff" d="M416 208c0 45.9-14.9 88.3-40 122.7l126.6 126.7c12.5 12.5 12.5 32.8 0 45.3s-32.8 12.5-45.3 0L330.7 376c-34.4 25.1-76.8 40-122.7 40C93.1 416 0 322.9 0 208S93.1 0 208 0s208 93.1 208 208M208 352a144 144 0 1 0 0-288 144 144 0 1 0 0 288"/></svg>
<div class="t ph" style="left:769.4px;top:306.40px;">Node ID</div>
<div class="t " style="left:762.4px;top:333.90px;color:#30363c">Node label</div>
<div class="inp" style="left:762.4px;top:348.29999999999995px;width:204.2px;height:18.8px"></div>
<div class="btnd" style="left:966.6px;top:348.29999999999995px;width:21px;height:18.8px"></div>
<svg class="ic" style="left:973.9px;top:354.49999999999994px;width:6.4px;height:6.4px;" viewBox="0 0 512 512" preserveAspectRatio="xMidYMid meet"><path fill="#fff" d="M416 208c0 45.9-14.9 88.3-40 122.7l126.6 126.7c12.5 12.5 12.5 32.8 0 45.3s-32.8 12.5-45.3 0L330.7 376c-34.4 25.1-76.8 40-122.7 40C93.1 416 0 322.9 0 208S93.1 0 208 0s208 93.1 208 208M208 352a144 144 0 1 0 0-288 144 144 0 1 0 0 288"/></svg>
<div class="t ph" style="left:769.4px;top:353.30px;">localhost</div>
<div class="t " style="left:762.4px;top:380.80px;color:#30363c">TCP/IP Address</div>
<div class="inp" style="left:762.4px;top:395.2px;width:204.2px;height:18.8px"></div>
<div class="btnd" style="left:966.6px;top:395.2px;width:21px;height:18.8px"></div>
<svg class="ic" style="left:973.9px;top:401.4px;width:6.4px;height:6.4px;" viewBox="0 0 512 512" preserveAspectRatio="xMidYMid meet"><path fill="#fff" d="M416 208c0 45.9-14.9 88.3-40 122.7l126.6 126.7c12.5 12.5 12.5 32.8 0 45.3s-32.8 12.5-45.3 0L330.7 376c-34.4 25.1-76.8 40-122.7 40C93.1 416 0 322.9 0 208S93.1 0 208 0s208 93.1 208 208M208 352a144 144 0 1 0 0-288 144 144 0 1 0 0 288"/></svg>
<div class="t ph" style="left:769.4px;top:400.20px;">*.*.*.* or *:*:*:*:*:*:*:*</div>
<div class="t " style="left:762.4px;top:427.70px;color:#30363c">Providing service</div>
<div class="inp" style="left:762.4px;top:442.09999999999997px;width:204.2px;height:18.8px"></div>
<div class="btnd" style="left:966.6px;top:442.09999999999997px;width:21px;height:18.8px"></div>
<svg class="ic" style="left:973.9px;top:448.29999999999995px;width:6.4px;height:6.4px;" viewBox="0 0 512 512" preserveAspectRatio="xMidYMid meet"><path fill="#fff" d="M416 208c0 45.9-14.9 88.3-40 122.7l126.6 126.7c12.5 12.5 12.5 32.8 0 45.3s-32.8 12.5-45.3 0L330.7 376c-34.4 25.1-76.8 40-122.7 40C93.1 416 0 322.9 0 208S93.1 0 208 0s208 93.1 208 208M208 352a144 144 0 1 0 0-288 144 144 0 1 0 0 288"/></svg>
<div class="t " style="left:771.4px;top:447.10px;color:#495057">Elasticsearch</div>
<svg class="ic" style="left:956.4px;top:448.9px;width:3.6px;height:5.2px;" viewBox="0 0 384 512" preserveAspectRatio="xMidYMid meet"><path fill="#343a40" d="M2.4 204.2C7.4 216.2 19 224 32 224h320c12.9 0 24.6-7.8 29.6-19.8s2.2-25.7-6.9-34.9l-160-160c-12.5-12.5-32.8-12.5-45.3 0l-160 160c-9.2 9.2-11.9 22.9-6.9 34.9zm0 103.5c-5 12-2.2 25.7 6.9 34.9l160 160c12.5 12.5 32.8 12.5 45.3 0l160-160c9.2-9.2 11.9-22.9 6.9-34.9S364.9 288 352 288H32c-12.9 0-24.6 7.8-29.6 19.8z"/></svg>
</aside>
</body></html>
